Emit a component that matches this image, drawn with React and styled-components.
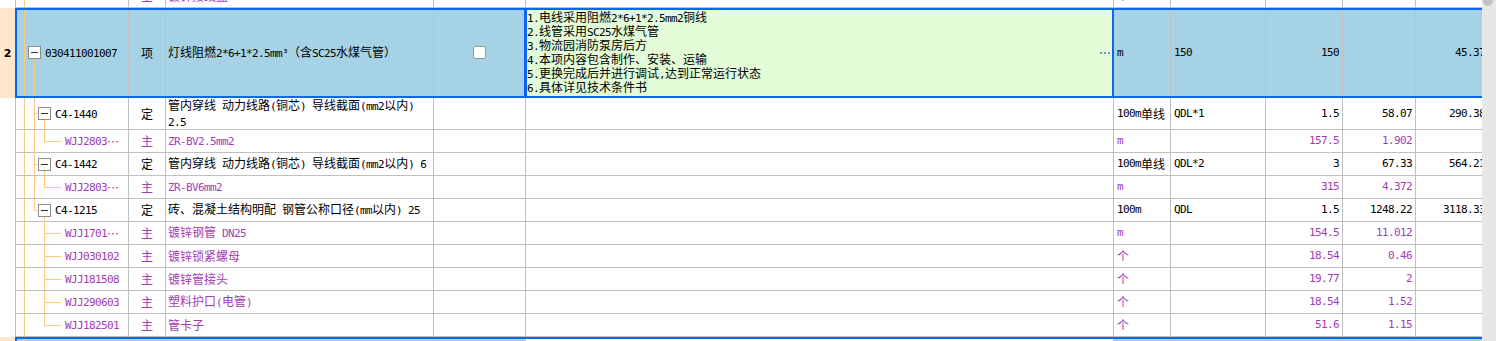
import React from 'react';
import styled, { createGlobalStyle } from 'styled-components';

const C = {
  grid: '#c0c0c0',
  blue: '#0a66f4',
  purple: '#a23cb6',
  tree: '#fec97b',
  sel: '#a5d3e5',
  desc: '#e3fbd6',
  peach: '#fde6c9',
  bar: '#e7e7e7',
  thumb: '#c2c2c2',
};

const COLS = '16px 113px 37px 268px 92px 588px 57px 95px 77px 73px 73px';

const GlobalStyle = createGlobalStyle`
  *, *::before, *::after { box-sizing: border-box; }
  html, body { margin: 0; padding: 0; background: #fff; overflow: hidden; }
  body {
    font-family: "Noto Sans CJK SC", "Noto Sans", sans-serif;
    font-size: 12px;
    color: #000;
  }
`;

const Screen = styled.div`
  display: flex;
  width: 1496px;
  height: 341px;
  overflow: hidden;
  background: #fff;
`;

const Viewport = styled.div`
  flex: 1;
  min-width: 0;
  overflow: hidden;
`;

const Table = styled.div`
  width: 1489px;
  margin-top: -15px;
`;

const Row = styled.div`
  position: relative;
  display: grid;
  grid-template-columns: ${COLS};
  height: ${p => p.$h}px;
  background: ${p => (p.$sel ? C.sel : '#fff')};
  color: ${p => (p.$mat ? C.purple : '#000')};
`;

const Frame = styled.div`
  position: absolute;
  top: 0;
  left: 15px;
  right: 0;
  bottom: 0;
  border: 2px solid ${C.blue};
  pointer-events: none;
`;

const Cell = styled.div`
  min-width: 0;
  overflow: hidden;
  white-space: nowrap;
  display: flex;
  align-items: center;
  border-right: 1px solid ${C.grid};
  border-bottom: 1px solid ${C.grid};
  line-height: 14px;
`;

const RowNum = styled.div`
  border-right: 1px solid ${C.grid};
  background: ${p => (p.$sel ? C.peach : '#fff')};
  display: flex;
  align-items: center;
  justify-content: center;
  font-family: "DejaVu Sans", sans-serif;
  font-weight: bold;
  font-size: 11px;
  color: #000;
`;

const TreeCell = styled(Cell)`
  align-items: stretch;
`;

const Code = styled.span`
  align-self: center;
`;

const TypeCell = styled(Cell)`
  justify-content: center;
`;

const NameCell = styled(Cell)`
  padding-left: 2px;
  white-space: normal;
`;

const CheckCell = styled(Cell)`
  justify-content: center;
`;

const Check = styled.span`
  width: 13px;
  height: 13px;
  border: 1px solid #9b9b9b;
  border-radius: 2px;
  background: #fff;
`;

const DescCell = styled(Cell)`
  align-items: stretch;
  padding-left: 1px;
  background: ${p => (p.$focus ? C.desc : p.$white ? '#fff' : 'transparent')};
  ${p =>
    p.$focus &&
    `border-right-color: ${C.blue}; box-shadow: -2px 0 0 ${C.blue}, inset 1px 0 0 ${C.blue}, inset -1px 0 0 ${C.blue};`}
`;

const DescText = styled.div`
  flex: 1;
  padding-top: 2px;
  line-height: 14px;
`;

const DescLine = styled.div`
  height: 14px;
`;

const Dots = styled.div`
  align-self: center;
  display: flex;
  gap: 2px;
  margin-right: 3px;
`;

const Dot = styled.span`
  width: 2px;
  height: 2px;
  background: #5b9bd5;
`;

const TextCell = styled(Cell)`
  padding-left: 3px;
`;

const NumCell = styled(Cell)`
  justify-content: flex-end;
  padding-right: 3px;
`;

const Lat = styled.span`
  font-family: "DejaVu Sans Mono", monospace;
  font-size: 11px;
  letter-spacing: -0.62px;
`;

const Ell = styled.span`
  display: inline-block;
  width: 12px;
  letter-spacing: 0;
  transform: translateY(2px);
`;

const ScrollBar = styled.div`
  flex: none;
  width: 14px;
  background: ${C.bar};
  padding: 0 3px 0 1px;
`;

const Thumb = styled.div`
  height: 16px;
  margin-top: -10px;
  border-radius: 5px;
  background: ${C.thumb};
`;

const GuideSvg = styled.svg`
  flex: none;
  display: block;
`;

const LAT = /([\x20-\x7E\u00B3]+|\u2026)/;

function Txt({ children }) {
  if (children === undefined || children === null || children === '') return null;
  const parts = String(children).split(LAT);
  return parts.map((p, i) => {
    if (p === '') return null;
    if (p === '\u2026') return <Ell key={i}>{p}</Ell>;
    return i % 2 === 1 ? <Lat key={i}>{p}</Lat> : <React.Fragment key={i}>{p}</React.Fragment>;
  });
}

function Guides({ h, w, lv, box, l1, l2 }) {
  const H = h - 1;
  const cy = Math.floor(H / 2) + 0.5;
  const X = [8.5, 18.5, 28.5];
  const seg = (x, mode, k) => {
    if (!mode) return null;
    const [a, b] = mode === 'full' ? [0, H] : mode === 'half' ? [0, cy] : [cy + 6, H];
    return <line key={k} x1={x} x2={x} y1={a} y2={b} />;
  };
  return (
    <GuideSvg width={w} height={H} stroke={C.tree} strokeWidth="1" shapeRendering="crispEdges" fill="none">
      <line x1={X[0]} x2={X[0]} y1={0} y2={H} />
      {seg(X[1], l1, 'a')}
      {seg(X[2], l2, 'b')}
      {lv >= 0 && <line x1={X[lv]} x2={box ? X[lv] + 4 : X[lv] + 16} y1={cy} y2={cy} />}
      {box && (
        <g>
          <rect x={X[lv] + 4} y={cy - 6} width="12" height="12" fill="#fff" stroke="#8c8c8c" />
          <line x1={X[lv] + 6.5} x2={X[lv] + 13.5} y1={cy} y2={cy} stroke="#333" />
        </g>
      )}
    </GuideSvg>
  );
}

const INDENT = { '-1': 56, 0: 29, 1: 39, 2: 49 };

const DATA = [
  { h: 23, mat: true, lv: -1, code: '06', type: '主', name: '镀锌接线盒', unit: '个' },
  {
    h: 90, sel: true, num: '2', lv: 0, box: true, l1: 'fromBox', focus: true, check: true,
    code: '030411001007', type: '项', name: '灯线阻燃2*6+1*2.5mm³（含SC25水煤气管）',
    desc: [
      '1.电线采用阻燃2*6+1*2.5mm2铜线',
      '2.线管采用SC25水煤气管',
      '3.物流园消防泵房后方',
      '4.本项内容包含制作、安装、运输',
      '5.更换完成后并进行调试,达到正常运行状态',
      '6.具体详见技术条件书',
    ],
    unit: 'm', expr: '150', qty: '150', price: '', total: '45.37',
  },
  {
    h: 32, lv: 1, box: true, l1: 'full', l2: 'fromBox', code: 'C4-1440', type: '定',
    name: '管内穿线 动力线路(铜芯) 导线截面(mm2以内) 2.5', unit: '100m单线', expr: 'QDL*1',
    qty: '1.5', price: '58.07', total: '290.38',
  },
  { h: 23, mat: true, lv: 2, l1: 'full', l2: 'half', code: 'WJJ2803…', type: '主', name: 'ZR-BV2.5mm2', unit: 'm', qty: '157.5', price: '1.902' },
  {
    h: 23, lv: 1, box: true, l1: 'full', l2: 'fromBox', code: 'C4-1442', type: '定',
    name: '管内穿线 动力线路(铜芯) 导线截面(mm2以内) 6', unit: '100m单线', expr: 'QDL*2',
    qty: '3', price: '67.33', total: '564.21',
  },
  { h: 23, mat: true, lv: 2, l1: 'full', l2: 'half', code: 'WJJ2803…', type: '主', name: 'ZR-BV6mm2', unit: 'm', qty: '315', price: '4.372' },
  {
    h: 23, lv: 1, box: true, l1: 'half', l2: 'fromBox', code: 'C4-1215', type: '定',
    name: '砖、混凝土结构明配 钢管公称口径(mm以内) 25', unit: '100m', expr: 'QDL',
    qty: '1.5', price: '1248.22', total: '3118.33',
  },
  { h: 23, mat: true, lv: 2, l2: 'full', code: 'WJJ1701…', type: '主', name: '镀锌钢管 DN25', unit: 'm', qty: '154.5', price: '11.012' },
  { h: 23, mat: true, lv: 2, l2: 'full', code: 'WJJ030102', type: '主', name: '镀锌锁紧螺母', unit: '个', qty: '18.54', price: '0.46' },
  { h: 23, mat: true, lv: 2, l2: 'full', code: 'WJJ181508', type: '主', name: '镀锌管接头', unit: '个', qty: '19.77', price: '2' },
  { h: 23, mat: true, lv: 2, l2: 'full', code: 'WJJ290603', type: '主', name: '塑料护口(电管)', unit: '个', qty: '18.54', price: '1.52' },
  { h: 23, mat: true, lv: 2, l2: 'half', code: 'WJJ182501', type: '主', name: '管卡子', unit: '个', qty: '51.6', price: '1.15' },
  {
    h: 23, sel: true, num: '3', lv: 0, box: true, l1: 'fromBox', white: true,
    code: '030411001008', type: '项', name: '镀锌线槽', unit: 'm', expr: '20', qty: '20',
  },
];

function GridRow({ r }) {
  return (
    <Row $h={r.h} $sel={r.sel} $mat={r.mat}>
      <RowNum $sel={r.sel}>{r.num}</RowNum>
      <TreeCell>
        <Guides h={r.h} w={INDENT[r.lv]} lv={r.lv} box={r.box} l1={r.l1} l2={r.l2} />
        <Code><Txt>{r.code}</Txt></Code>
      </TreeCell>
      <TypeCell>{r.type}</TypeCell>
      <NameCell><span><Txt>{r.name}</Txt></span></NameCell>
      <CheckCell>{r.check && <Check />}</CheckCell>
      <DescCell $focus={r.focus} $white={r.white}>
        <DescText>
          {(r.desc || []).map((d, i) => (
            <DescLine key={i}><Txt>{d}</Txt></DescLine>
          ))}
        </DescText>
        {r.focus && (
          <Dots>
            <Dot />
            <Dot />
            <Dot />
          </Dots>
        )}
      </DescCell>
      <TextCell><Txt>{r.unit}</Txt></TextCell>
      <TextCell><Txt>{r.expr}</Txt></TextCell>
      <NumCell><Txt>{r.qty}</Txt></NumCell>
      <NumCell><Txt>{r.price}</Txt></NumCell>
      <NumCell><Txt>{r.total}</Txt></NumCell>
      {r.sel && <Frame />}
    </Row>
  );
}

export default function App() {
  return (
    <>
      <GlobalStyle />
      <Screen lang="zh-CN">
        <Viewport>
          <Table>
            {DATA.map((r, i) => (
              <GridRow key={i} r={r} />
            ))}
          </Table>
        </Viewport>
        <ScrollBar>
          <Thumb />
        </ScrollBar>
      </Screen>
    </>
  );
}
